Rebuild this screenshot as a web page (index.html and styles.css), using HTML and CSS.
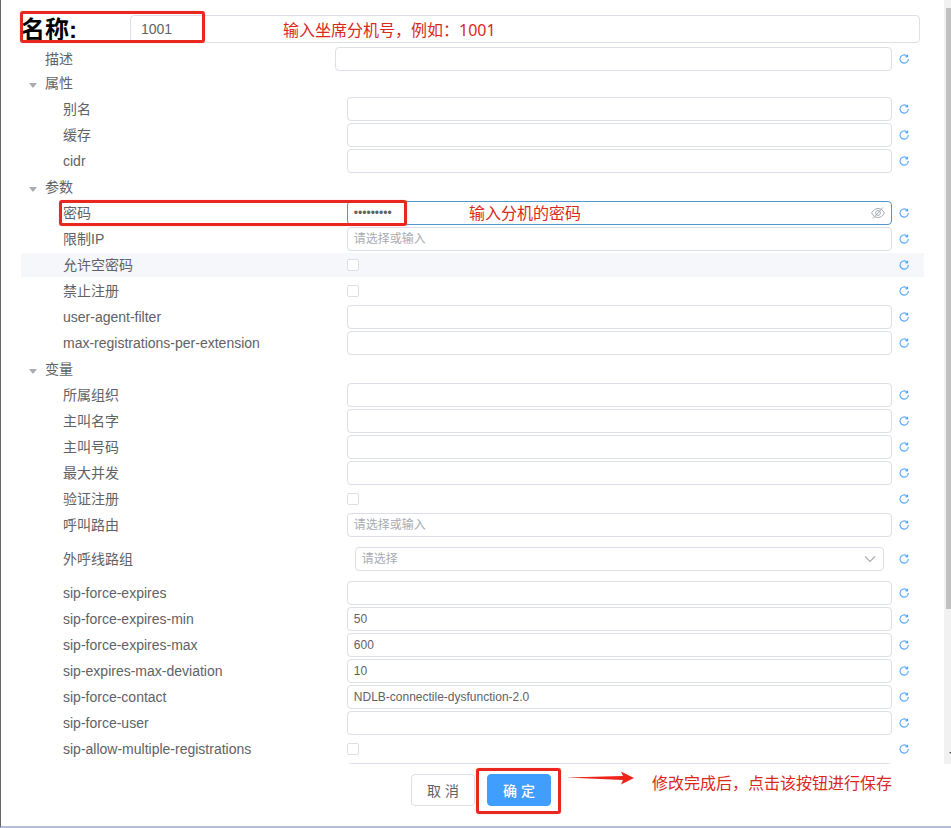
FILE: index.html
```html
<!DOCTYPE html>
<html lang="zh-CN">
<head>
    <meta charset="UTF-8">
    <meta name="viewport" content="width=device-width, initial-scale=1.0">
    <title>名称: 1001</title>
    <link rel="stylesheet" href="styles.css">
</head>
<body>
    <!-- shared icons -->
    <svg class="sprite" aria-hidden="true">
        <symbol id="icon-reset" viewBox="0 0 1024 1024">
            <path fill="currentColor" stroke="currentColor" stroke-width="24" d="M784.512 230.272v-50.56a32 32 0 1 1 64 0v149.056a32 32 0 0 1-32 32H667.52a32 32 0 1 1 0-64h92.992A320 320 0 1 0 524.8 833.152a320 320 0 0 0 320-320h64a384 384 0 0 1-384 384 384 384 0 0 1-384-384 384 384 0 0 1 643.712-282.88z"/>
        </symbol>
        <symbol id="icon-hide" viewBox="0 0 14 14">
            <g fill="none" stroke="currentColor" stroke-width="1">
                <path d="M0.6 7C2.2 4 4.4 2.5 7 2.5S11.8 4 13.4 7C11.8 10 9.6 11.5 7 11.5S2.2 10 0.6 7z"/>
                <circle cx="7" cy="7" r="2.4"/>
                <path d="M2 12.6L12 1.4"/>
            </g>
        </symbol>
        <symbol id="icon-down" viewBox="0 0 12 12">
            <path fill="none" stroke="currentColor" stroke-width="1.1" d="M1 3.5L6 8.5L11 3.5"/>
        </symbol>
    </svg>

    <form class="dialog">
        <div class="dialog-body">
            <div class="content">
                <div class="name-row">
                    <label class="name-label" for="name">名称:</label>
                    <input class="name-input" id="name" type="text" value="1001">
                    <span class="mark mark-name"></span>
                    <span class="note note-name">输入坐席分机号，例如：1001</span>
                </div>

                <div class="row row-top">
                    <label for="desc">描述</label>
                    <div class="field"><input id="desc" type="text"></div>
                    <button type="button" class="reset" aria-label="重置"><svg><use href="#icon-reset"/></svg></button>
                </div>

                <details open>
                    <summary>属性</summary>
                    <div class="row">
                        <label for="alias">别名</label>
                        <div class="field"><input id="alias" type="text"></div>
                        <button type="button" class="reset" aria-label="重置"><svg><use href="#icon-reset"/></svg></button>
                    </div>
                    <div class="row">
                        <label for="cache">缓存</label>
                        <div class="field"><input id="cache" type="text"></div>
                        <button type="button" class="reset" aria-label="重置"><svg><use href="#icon-reset"/></svg></button>
                    </div>
                    <div class="row">
                        <label for="cidr">cidr</label>
                        <div class="field"><input id="cidr" type="text"></div>
                        <button type="button" class="reset" aria-label="重置"><svg><use href="#icon-reset"/></svg></button>
                    </div>
                </details>

                <details open>
                    <summary>参数</summary>
                    <div class="row">
                        <label for="password">密码</label>
                        <div class="field">
                            <input class="active" id="password" type="password" value="123456789">
                            <svg class="field-icon"><use href="#icon-hide"/></svg>
                        </div>
                        <button type="button" class="reset" aria-label="重置"><svg><use href="#icon-reset"/></svg></button>
                        <span class="mark mark-password"></span>
                        <span class="note note-password">输入分机的密码</span>
                    </div>
                    <div class="row">
                        <label for="limit-ip">限制IP</label>
                        <div class="field"><input id="limit-ip" type="text" placeholder="请选择或输入"></div>
                        <button type="button" class="reset" aria-label="重置"><svg><use href="#icon-reset"/></svg></button>
                    </div>
                    <div class="row current">
                        <label for="allow-empty">允许空密码</label>
                        <div class="field"><input id="allow-empty" type="checkbox"></div>
                        <button type="button" class="reset" aria-label="重置"><svg><use href="#icon-reset"/></svg></button>
                    </div>
                    <div class="row">
                        <label for="deny-register">禁止注册</label>
                        <div class="field"><input id="deny-register" type="checkbox"></div>
                        <button type="button" class="reset" aria-label="重置"><svg><use href="#icon-reset"/></svg></button>
                    </div>
                    <div class="row">
                        <label for="ua-filter">user-agent-filter</label>
                        <div class="field"><input id="ua-filter" type="text"></div>
                        <button type="button" class="reset" aria-label="重置"><svg><use href="#icon-reset"/></svg></button>
                    </div>
                    <div class="row">
                        <label for="max-reg">max-registrations-per-extension</label>
                        <div class="field"><input id="max-reg" type="text"></div>
                        <button type="button" class="reset" aria-label="重置"><svg><use href="#icon-reset"/></svg></button>
                    </div>
                </details>

                <details open>
                    <summary>变量</summary>
                    <div class="row">
                        <label for="org">所属组织</label>
                        <div class="field"><input id="org" type="text"></div>
                        <button type="button" class="reset" aria-label="重置"><svg><use href="#icon-reset"/></svg></button>
                    </div>
                    <div class="row">
                        <label for="caller-name">主叫名字</label>
                        <div class="field"><input id="caller-name" type="text"></div>
                        <button type="button" class="reset" aria-label="重置"><svg><use href="#icon-reset"/></svg></button>
                    </div>
                    <div class="row">
                        <label for="caller-number">主叫号码</label>
                        <div class="field"><input id="caller-number" type="text"></div>
                        <button type="button" class="reset" aria-label="重置"><svg><use href="#icon-reset"/></svg></button>
                    </div>
                    <div class="row">
                        <label for="max-calls">最大并发</label>
                        <div class="field"><input id="max-calls" type="text"></div>
                        <button type="button" class="reset" aria-label="重置"><svg><use href="#icon-reset"/></svg></button>
                    </div>
                    <div class="row">
                        <label for="auth-register">验证注册</label>
                        <div class="field"><input id="auth-register" type="checkbox"></div>
                        <button type="button" class="reset" aria-label="重置"><svg><use href="#icon-reset"/></svg></button>
                    </div>
                    <div class="row">
                        <label for="call-route">呼叫路由</label>
                        <div class="field"><input id="call-route" type="text" placeholder="请选择或输入"></div>
                        <button type="button" class="reset" aria-label="重置"><svg><use href="#icon-reset"/></svg></button>
                    </div>
                    <div class="row">
                        <label for="line-group">外呼线路组</label>
                        <div class="field field-select">
                            <select id="line-group">
                                <option value="">请选择</option>
                            </select>
                            <svg class="select-icon"><use href="#icon-down"/></svg>
                        </div>
                        <button type="button" class="reset" aria-label="重置"><svg><use href="#icon-reset"/></svg></button>
                    </div>
                    <div class="row">
                        <label for="expires">sip-force-expires</label>
                        <div class="field"><input id="expires" type="text"></div>
                        <button type="button" class="reset" aria-label="重置"><svg><use href="#icon-reset"/></svg></button>
                    </div>
                    <div class="row">
                        <label for="expires-min">sip-force-expires-min</label>
                        <div class="field"><input id="expires-min" type="text" value="50"></div>
                        <button type="button" class="reset" aria-label="重置"><svg><use href="#icon-reset"/></svg></button>
                    </div>
                    <div class="row">
                        <label for="expires-max">sip-force-expires-max</label>
                        <div class="field"><input id="expires-max" type="text" value="600"></div>
                        <button type="button" class="reset" aria-label="重置"><svg><use href="#icon-reset"/></svg></button>
                    </div>
                    <div class="row">
                        <label for="deviation">sip-expires-max-deviation</label>
                        <div class="field"><input id="deviation" type="text" value="10"></div>
                        <button type="button" class="reset" aria-label="重置"><svg><use href="#icon-reset"/></svg></button>
                    </div>
                    <div class="row">
                        <label for="contact">sip-force-contact</label>
                        <div class="field"><input id="contact" type="text" value="NDLB-connectile-dysfunction-2.0"></div>
                        <button type="button" class="reset" aria-label="重置"><svg><use href="#icon-reset"/></svg></button>
                    </div>
                    <div class="row">
                        <label for="force-user">sip-force-user</label>
                        <div class="field"><input id="force-user" type="text"></div>
                        <button type="button" class="reset" aria-label="重置"><svg><use href="#icon-reset"/></svg></button>
                    </div>
                    <div class="row">
                        <label for="multi-reg">sip-allow-multiple-registrations</label>
                        <div class="field"><input id="multi-reg" type="checkbox"></div>
                        <button type="button" class="reset" aria-label="重置"><svg><use href="#icon-reset"/></svg></button>
                    </div>
                    <div class="row">
                        <div class="spacer"></div>
                        <div class="field"><input type="text" aria-label="变量"></div>
                    </div>
                </details>
            </div>

            <div class="scrollbar">
                <div class="scroll-thumb"></div>
                <svg class="scroll-arrow" viewBox="0 0 8 4"><path d="M0 0H8L4 4z"/></svg>
            </div>
        </div>

        <div class="dialog-footer">
            <button type="button" class="btn">取 消</button>
            <div class="confirm">
                <button type="submit" class="btn btn-primary">确 定</button>
                <span class="mark mark-confirm"></span>
                <svg class="arrow" viewBox="0 0 68 14"><path d="M0 6.5L57 5L55 0.5L68 7L55 13.5L57 9z"/></svg>
                <span class="note note-confirm">修改完成后，点击该按钮进行保存</span>
            </div>
        </div>
    </form>
</body>
</html>
```
FILE: styles.css
```css
* {
    box-sizing: border-box;
}
body {
    margin: 0;
    font-family: "Liberation Sans", "Noto Sans CJK SC", sans-serif;
    font-size: 14px;
    color: #606266;
    background: #fff;
}
input, select, button {
    font-family: inherit;
    color: inherit;
    margin: 0;
}
.sprite {
    display: none;
}

/* dialog */
.dialog {
    display: flex;
    flex-direction: column;
    height: 100vh;
    border-left: 1px solid #66676b;
    border-bottom: 2px solid #b3bdd3;
}
.dialog-body {
    flex: 1;
    min-height: 0;
    display: flex;
    overflow: hidden;
}
.content {
    flex: 1;
    padding: 15px 20px 0;
}

/* name */
.name-row {
    position: relative;
    display: flex;
    align-items: center;
    height: 28px;
    margin-bottom: 4px;
    padding-right: 4px;
}
.name-label {
    width: 109px;
    padding-top: 2px;
    font-size: 24px;
    line-height: 28px;
    font-weight: bold;
    color: #000;
}
.name-input {
    flex: 1;
    height: 28px;
    padding: 0 10px;
    border: 1px solid #dcdfe6;
    border-radius: 4px;
    font-size: 14px;
}

/* rows */
.row {
    position: relative;
    display: flex;
    align-items: center;
    min-height: 24px;
    margin-bottom: 2px;
    padding-left: 42px;
    padding-right: 13px;
}
.row-top {
    margin-bottom: 0;
    padding-left: 24px;
}
.row.current {
    background: #f5f7fa;
}
.row label,
.spacer {
    flex: 0 0 calc(33% + 4px);
    line-height: 24px;
}
.field {
    position: relative;
    flex: 1;
    display: flex;
    align-items: center;
    margin-right: 5px;
}
.row > .spacer + .field {
    margin-right: 19px;
}
.field input[type="text"],
.field input[type="password"],
.field select {
    width: 100%;
    height: 24px;
    padding: 0 6px;
    border: 1px solid #dcdfe6;
    border-radius: 4px;
    background: #fff;
    font-size: 12px;
    outline: none;
}
.field input.active {
    border-color: #4f97cc;
}
.field input::placeholder {
    color: #a8abb2;
}
.field input[type="checkbox"] {
    appearance: none;
    width: 12px;
    height: 12px;
    border: 1px solid #dcdfe6;
    border-radius: 2px;
    background: #fff;
}
.field-select {
    padding: 8px;
}
.field select {
    appearance: none;
    color: #a8abb2;
}
.field-icon {
    position: absolute;
    right: 7px;
    width: 14px;
    height: 14px;
    color: #a8abb2;
}
.select-icon {
    position: absolute;
    right: 16px;
    width: 12px;
    height: 12px;
    color: #a8abb2;
    pointer-events: none;
}
.reset {
    display: flex;
    align-items: center;
    justify-content: center;
    width: 14px;
    height: 14px;
    padding: 0;
    border: none;
    background: none;
    color: #409eff;
    cursor: pointer;
}
.reset svg {
    width: 12px;
    height: 12px;
}

/* groups */
summary {
    display: flex;
    align-items: center;
    height: 22px;
    margin-bottom: 4px;
    list-style: none;
    cursor: pointer;
}
summary::before {
    content: "";
    margin: 6px 8px 0;
    border: 4px solid transparent;
    border-top: 5px solid #a8abb2;
    border-bottom: none;
}

/* scrollbar */
.scrollbar {
    display: flex;
    flex-direction: column;
    justify-content: space-between;
    width: 7px;
    padding: 8px 0;
    background: #f1f1f1;
    overflow: hidden;
}
.scroll-thumb {
    height: 80.4%;
    margin-left: 2px;
    background: #c1c1c1;
}
.scroll-arrow {
    flex: none;
    width: 8px;
    height: 4px;
    margin-left: 5px;
    fill: #505050;
}

/* footer */
.dialog-footer {
    display: flex;
    justify-content: center;
    gap: 12px;
    padding: 10px 0 20px 10px;
}
.btn {
    height: 32px;
    padding: 0 15px;
    border: 1px solid #dcdfe6;
    border-radius: 4px;
    background: #fff;
    font-size: 14px;
    white-space: nowrap;
    cursor: pointer;
}
.btn-primary {
    border-color: #409eff;
    background: #409eff;
    font-weight: 500;
    color: #fff;
}
.confirm {
    position: relative;
}

/* red notes */
.mark {
    position: absolute;
    border: 3px solid #e8281f;
    border-radius: 3px;
    box-shadow: 0 0 1px #f77;
    pointer-events: none;
}
.mark-name {
    left: -1px;
    top: -4px;
    width: 185px;
    height: 32px;
}
.mark-password {
    left: 38px;
    top: -1px;
    width: 348px;
    height: 26px;
}
.mark-confirm {
    left: -11px;
    top: -6px;
    width: 85px;
    height: 46px;
}
.note {
    position: absolute;
    font-family: "Noto Sans", "Noto Sans CJK SC", sans-serif;
    font-size: 16px;
    line-height: 24px;
    color: #d9291c;
    white-space: nowrap;
    pointer-events: none;
}
.note-name {
    left: 262px;
    top: 3px;
}
.note-password {
    left: 448px;
    top: 0;
}
.note-confirm {
    left: 165px;
    top: -3px;
}
.arrow {
    position: absolute;
    left: 79px;
    top: -3px;
    width: 68px;
    height: 14px;
    fill: #ee2318;
}
```
